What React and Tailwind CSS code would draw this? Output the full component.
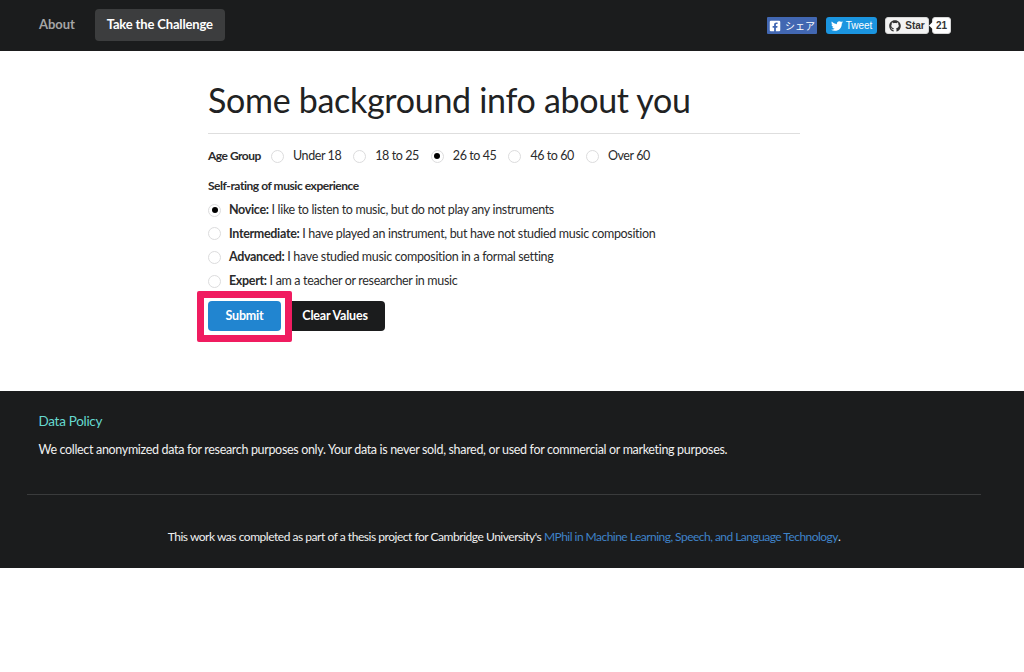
import { FaFacebookSquare, FaTwitter, FaGithub } from "react-icons/fa";

function Radio({ checked }) {
  return (
    <span className="w-[13px] h-[13px] rounded-full border border-[#dcdcdd] bg-white flex items-center justify-center shrink-0">
      {checked && <span className="w-[6px] h-[6px] rounded-full bg-black" />}
    </span>
  );
}

function AgeOption({ label, checked }) {
  return (
    <div className="flex items-center gap-[9px] mr-[12px] tracking-[-0.42px]">
      <Radio checked={checked} />
      <span>{label}</span>
    </div>
  );
}

function Experience({ title, text, checked }) {
  return (
    <div className="flex items-center h-[23.67px] gap-[8px]">
      <Radio checked={checked} />
      <span>
        <b className="font-bold">{title}</b> {text}
      </span>
    </div>
  );
}

export default function App() {
  return (
    <div className="min-h-[672px] bg-white text-[#2b2b2c] text-[12.5px] tracking-[-0.33px] font-['Lato','Liberation_Sans',sans-serif]">
      <nav className="h-[51px] bg-[#1b1c1d] flex items-center pl-[39px] pr-[73px]">
        <a className="-mt-[1px] text-[13px] tracking-[-0.05px] font-bold text-[#a5a5a5]">About</a>
        <a className="-mt-[1px] ml-[20px] h-[32px] w-[130px] flex items-center justify-center rounded bg-[#3c3d3e] text-[13px] tracking-[-0.15px] font-bold text-white">
          Take the Challenge
        </a>
        <div className="ml-auto flex items-center tracking-normal font-['Liberation_Sans',sans-serif] text-[10px]">
          <span className="h-[17px] w-[50px] bg-[#4267b2] text-white flex items-center justify-center gap-[4px] rounded-[1px] font-['Noto_Sans_CJK_JP',sans-serif]">
            <FaFacebookSquare className="w-[12px] h-[12px]" />
            シェア
          </span>
          <span className="ml-[9px] h-[17px] w-[51px] bg-[#1b95e0] text-white flex items-center justify-center gap-[3px] rounded-[3px]">
            <FaTwitter className="w-[12px] h-[12px]" />
            Tweet
          </span>
          <span className="ml-[8px] h-[17px] w-[44px] bg-[#f3f3f3] text-[#333] font-bold flex items-center justify-center gap-[4px] rounded-[3px] border border-[#d5d5d5]">
            <FaGithub className="w-[12px] h-[12px]" />
            Star
          </span>
          <span className="relative ml-[3px] h-[17px] w-[19px] bg-white text-[#333] font-bold flex items-center justify-center rounded-[3px] border border-[#d5d5d5]">
            <span className="absolute -left-[3px] top-[5px] w-[5px] h-[5px] bg-white rotate-45" />
            21
          </span>
        </div>
      </nav>

      <main className="w-[592px] ml-[208px] h-[340px] pt-[27px]">
        <h1 className="text-[34px] leading-[44px] tracking-[-0.3px] font-normal text-[#212223] pb-[11px] border-b border-[#dedede]">
          Some background info about you
        </h1>
        <div className="mt-[13px] h-[18px] flex items-center">
          <span className="font-bold text-[12px] tracking-[-0.5px] w-[63px]">Age Group</span>
          <AgeOption label="Under 18" />
          <AgeOption label="18 to 25" />
          <AgeOption label="26 to 45" checked />
          <AgeOption label="46 to 60" />
          <AgeOption label="Over 60" />
        </div>
        <p className="mt-[12px] font-bold text-[12px] tracking-[-0.45px] leading-[18px]">Self-rating of music experience</p>
        <div className="mt-[3.5px]">
          <Experience checked title="Novice:" text="I like to listen to music, but do not play any instruments" />
          <Experience title="Intermediate:" text="I have played an instrument, but have not studied music composition" />
          <Experience title="Advanced:" text="I have studied music composition in a formal setting" />
          <Experience title="Expert:" text="I am a teacher or researcher in music" />
        </div>
        <div className="relative mt-[7.5px] flex gap-[4px] font-bold tracking-[-0.2px]">
          <button className="w-[73px] h-[30px] pt-[2px] rounded bg-[#2185d0] text-white">Submit</button>
          <button className="w-[100px] h-[30px] pt-[2px] rounded bg-[#1b1c1d] text-white">Clear Values</button>
          <span className="absolute -left-[11px] -top-[10px] w-[95px] h-[51px] rounded-[2px] border-[7px] border-[#f01c60]" />
        </div>
      </main>

      <footer className="h-[177px] bg-[#1b1c1d] text-white pt-[20px]">
        <h3 className="pl-[38.5px] text-[13.5px] tracking-[-0.3px] leading-[20px] text-[#66d9d0]">Data Policy</h3>
        <p className="pl-[38.5px] mt-[10px] leading-[18px] text-[#f0f0f0]">
          We collect anonymized data for research purposes only. Your data is never sold, shared, or used for commercial or marketing purposes.
        </p>
        <div className="ml-[27px] mr-[43px] mt-[35px] border-t border-[#3a3b3c]" />
        <p className="mt-[33px] mr-[16px] text-center text-[12px] tracking-[-0.47px] leading-[18px] text-[#f0f0f0]">
          This work was completed as part of a thesis project for Cambridge University's{" "}
          <a className="text-[#3f83c9] tracking-[-0.53px]">MPhil in Machine Learning, Speech, and Language Technology</a>.
        </p>
      </footer>
    </div>
  );
}
